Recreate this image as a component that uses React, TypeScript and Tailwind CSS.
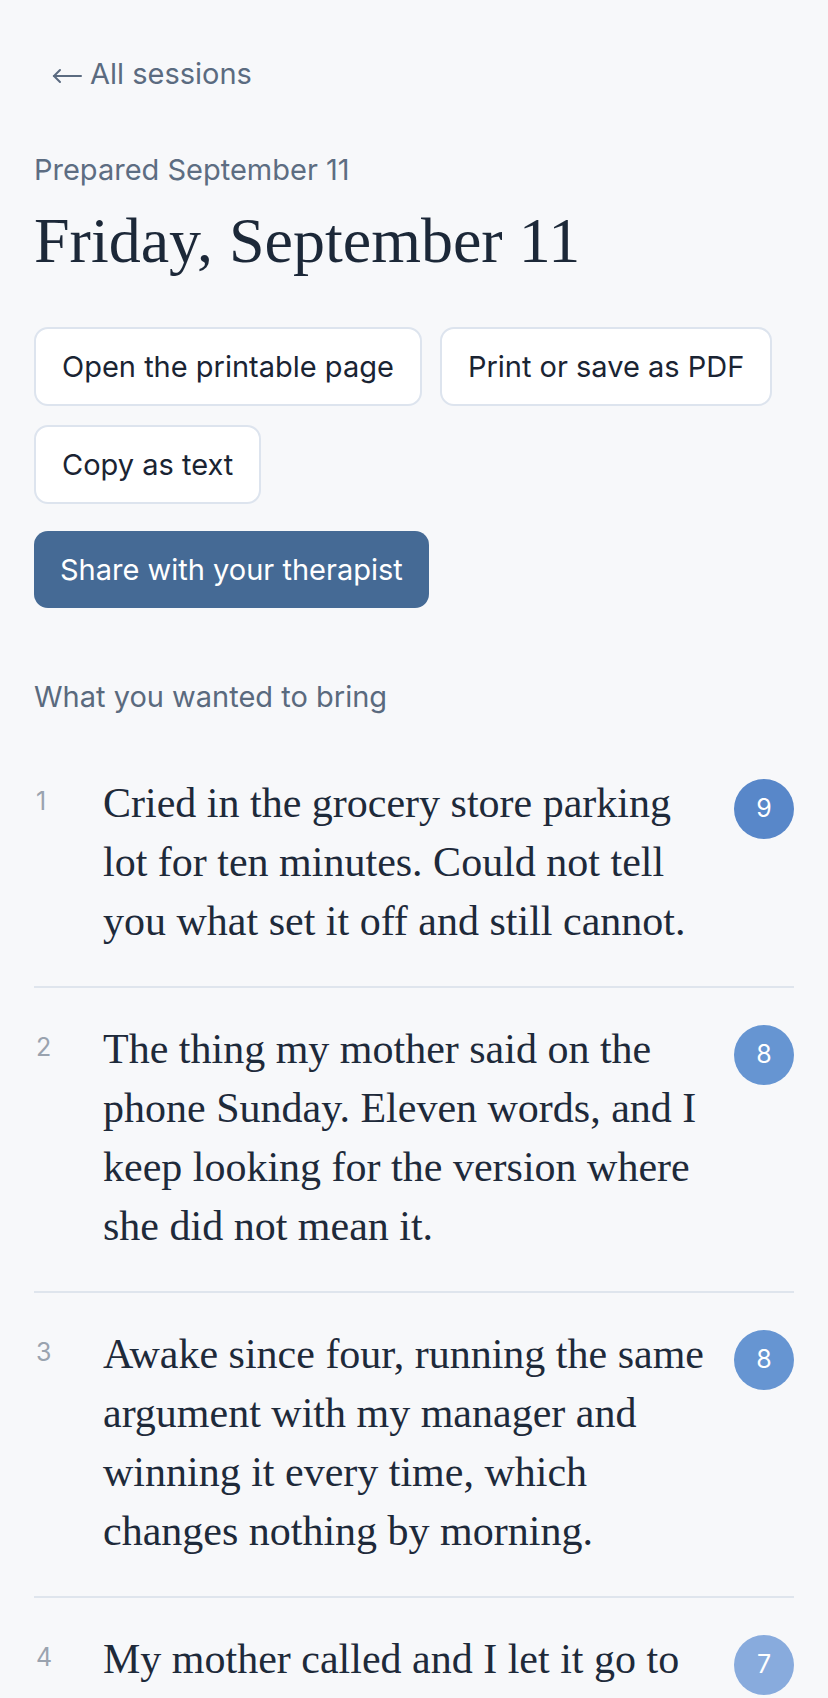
import React from "react"

const sans = "font-['Inter','Noto_Sans',sans-serif]"
const serif = "font-['Liberation_Serif','Times_New_Roman',serif]"

type Item = {
    n: number
    text: string
    score: number
    badge: string
}

const items: Item[] = [
    {
        n: 1,
        text: "Cried in the grocery store parking lot for ten minutes. Could not tell you what set it off and still cannot.",
        score: 9,
        badge: "bg-[#5887c9]",
    },
    {
        n: 2,
        text: "The thing my mother said on the phone Sunday. Eleven words, and I keep looking for the version where she did not mean it.",
        score: 8,
        badge: "bg-[#6695d2]",
    },
    {
        n: 3,
        text: "Awake since four, running the same argument with my manager and winning it every time, which changes nothing by morning.",
        score: 8,
        badge: "bg-[#6695d2]",
    },
    {
        n: 4,
        text: "My mother called and I let it go to voicemail. I have not listened to it yet and I am not sure I will.",
        score: 7,
        badge: "bg-[#88abdd]",
    },
]

function ActionButton({ children }: { children: React.ReactNode }) {
    return (
        <button
            type="button"
            className="h-[79px] flex items-center px-[26px] bg-white border-2 border-[#dde4ee] rounded-[14px] text-[29px] leading-[44px] text-[#1a2433]"
        >
            {children}
        </button>
    )
}

export default function App() {
    return (
        <div className={`min-h-screen bg-[#f7f8fa] ${sans}`}>
            <div className="px-[34px] pt-[52px] pb-[80px]">
                <a href="#" className="flex items-center gap-[8px] pl-[18px] text-[29px] leading-[44px] text-[#5b6b80]">
                    {/* long thin arrow, the font's own glyph is too short */}
                    <svg width="30" height="18" viewBox="0 0 30 18" fill="none" stroke="currentColor" strokeWidth="2" strokeLinecap="round" className="mt-[3px]">
                        <path d="M29 9H2" />
                        <path d="M8 3L2 9l6 6" />
                    </svg>
                    <span>All sessions</span>
                </a>

                <p className="mt-[52px] text-[29px] leading-[44px] text-[#5d6d82]">Prepared September 11</p>
                <h1 className={`mt-[13px] ${serif} text-[64px] leading-[72px] text-[#1c2838]`}>
                    Friday, September 11
                </h1>

                <div className="mt-[50px] flex flex-wrap gap-x-[18px] gap-y-[19px]">
                    <ActionButton>Open the printable page</ActionButton>
                    <ActionButton>Print or save as PDF</ActionButton>
                    <ActionButton>Copy as text</ActionButton>
                </div>

                <button
                    type="button"
                    className="mt-[27px] h-[77px] flex items-center px-[26px] bg-[#456a95] rounded-[14px] text-[29px] leading-[44px] text-white"
                >
                    Share with your therapist
                </button>

                <h2 className="mt-[67px] text-[29px] leading-[44px] text-[#5a6a7e]">What you wanted to bring</h2>

                <ol className="mt-[23px]">
                    {items.map((item) => (
                        <li
                            key={item.n}
                            className="flex items-start pt-[32px] pb-[35px] border-b-2 border-[#dfe5ed]"
                        >
                            <span className="w-[69px] shrink-0 mt-[9px] pl-[2px] text-[25px] leading-[36px] text-[#9aa3af]">
                                {item.n}
                            </span>
                            <p className={`w-[608px] shrink-0 ${serif} text-[42px] leading-[59px] text-[#1e2a3a]`}>
                                {item.text}
                            </p>
                            <span
                                className={`ml-auto mt-[5px] w-[60px] h-[60px] shrink-0 rounded-full flex items-center justify-center text-[25px] text-white ${item.badge}`}
                            >
                                {item.score}
                            </span>
                        </li>
                    ))}
                </ol>
            </div>
        </div>
    )
}
